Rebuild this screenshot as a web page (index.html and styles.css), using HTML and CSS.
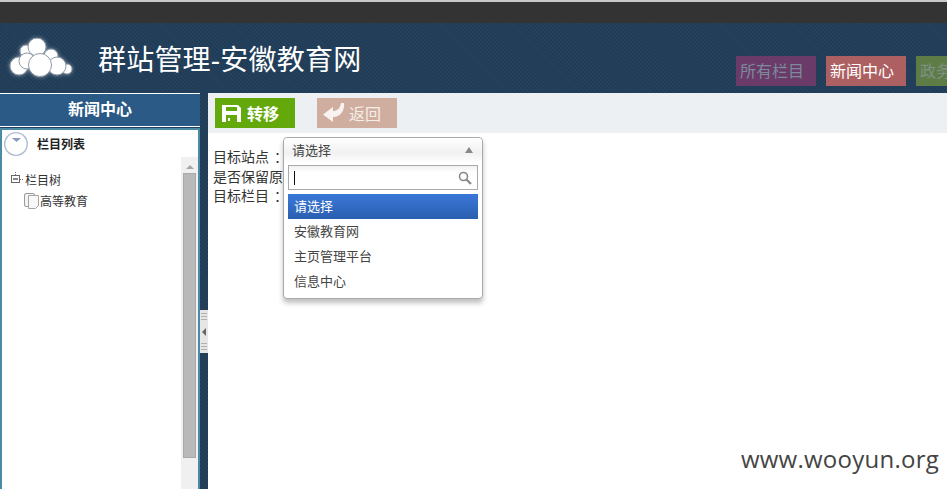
FILE: index.html
```html
<!DOCTYPE html>
<html lang="zh">
<head>
<meta charset="utf-8">
<title>群站管理-安徽教育网</title>
<link rel="stylesheet" href="styles.css">
</head>
<body>
<div class="topline"></div>
<div class="topbar"></div>
<div class="app">
  <header class="header">
    <svg class="logo" width="66" height="44" viewBox="0 0 66 44">
      <g fill="#fff" stroke="#8f9aa6" stroke-width="1">
        <circle cx="18" cy="13" r="6"/>
        <circle cx="43" cy="18" r="7"/>
        <circle cx="29" cy="9" r="9"/>
        <circle cx="59" cy="31" r="5"/>
        <circle cx="49" cy="28" r="9"/>
        <circle cx="11" cy="28" r="9"/>
        <circle cx="19" cy="23" r="8"/>
        <circle cx="32" cy="27" r="11.500"/>
      </g>
    </svg>
    <h1 class="title">群站管理-安徽教育网</h1>
    <nav class="tabs">
      <span class="tab tab-purple">所有栏目</span>
      <span class="tab tab-red">新闻中心</span>
      <span class="tab tab-green">政务</span>
    </nav>
  </header>
  <div class="body">
    <aside class="sidebar">
      <div class="side-title">新闻中心</div>
      <div class="side-panel">
        <div class="panel-head">
          <svg class="chev" width="24" height="24" viewBox="0 0 24 24">
            <circle cx="12" cy="12" r="11.300" fill="#fff" stroke="#aab8d2" stroke-width="1.300"/>
            <path d="M8 6h9l-4.500 4z" fill="#8a9bbd"/>
          </svg>
          <span>栏目列表</span>
        </div>
        <div class="tree-wrap">
          <div class="tree">
            <div class="node">
              <svg width="14" height="14" viewBox="0 0 14 14">
                <path d="M4.500 0v3M9 7.500h4" stroke="#777" stroke-dasharray="1 1" fill="none"/>
                <rect x="0.500" y="3.500" width="8" height="7" fill="#fff" stroke="#666"/>
                <path d="M2 7h5" stroke="#111"/>
              </svg>
              <span>栏目树</span>
            </div>
            <div class="node leaf">
              <svg width="16" height="18" viewBox="0 0 16 18">
                <rect x="0.500" y="2.500" width="10" height="13" rx="1.500" fill="#f4f4f4" stroke="#9a9a9a"/>
                <path d="M4.500 4.500h10v10l-3 3h-7z" fill="#f8f8f8" stroke="#a5a5a5"/>
              </svg>
              <span>高等教育</span>
            </div>
          </div>
          <div class="scroll">
            <span class="scroll-up"></span>
            <div class="scroll-thumb"></div>
          </div>
        </div>
      </div>
    </aside>
    <div class="splitter">
      <div class="grip">
        <i></i><i></i><i></i>
        <b></b>
        <i></i><i></i><i></i>
      </div>
    </div>
    <main class="main">
      <div class="toolbar">
        <button class="btn btn-save">
          <svg width="19" height="17" viewBox="0 0 19 17"><path fill-rule="evenodd" fill="#fff" d="M0 0h16l3 3v14H0zM4 2v4h11V2zM4 10v7h11v-7zM6 13h2v3H6z"/></svg>
          转移
        </button>
        <button class="btn btn-back">
          <svg width="22" height="20" viewBox="0 0 22 20"><path fill="#f8f3f0" d="M0 11.500L10 4v4c4 0 7-2 8-8h3c1 8-4 14-11 14v5z"/></svg>
          返回
        </button>
      </div>
      <form class="form">
        <div class="row">目标站点<span class="colon">：</span></div>
        <div class="row row-cut">是否保留原</div>
        <div class="row">目标栏目<span class="colon">：</span></div>
        <div class="select">
          <div class="select-head"><span>请选择</span><span class="arrow"></span></div>
          <div class="search">
            <span class="caret"></span>
            <svg width="14" height="14" viewBox="0 0 14 14"><circle cx="5.500" cy="5.500" r="4" fill="none" stroke="#888" stroke-width="1.600"/><path d="M8.500 8.500l4.500 4.500" stroke="#888" stroke-width="2.200"/></svg>
          </div>
          <ul class="options">
            <li class="on">请选择</li>
            <li>安徽教育网</li>
            <li>主页管理平台</li>
            <li>信息中心</li>
          </ul>
        </div>
      </form>
      <div class="mark">www.wooyun.org</div>
    </main>
  </div>
</div>
</body>
</html>
```
FILE: styles.css
```css
* { box-sizing: border-box; }
html, body { height: 100%; }
body {
  margin: 0;
  height: 489px;
  overflow: hidden;
  display: flex;
  flex-direction: column;
  font-family: "Liberation Sans", "Noto Sans CJK SC", sans-serif;
  font-size: 13px;
  color: #333;
  background: #fff;
}
.topline { height: 2px; background: #c8c8c8; flex: none; }
.topbar { height: 21px; background: #333; flex: none; }
.app {
  flex: 1;
  min-height: 0;
  display: flex;
  flex-direction: column;
  background-color: #223f5b;
  background-image:
    repeating-conic-gradient(rgba(0,0,0,.06) 0 25%, transparent 0 50%),
    repeating-linear-gradient(45deg, rgba(255,255,255,.02) 0 1px, transparent 1px 3px);
  background-size: 4px 4px, auto;
}
.header { height: 70px; flex: none; display: flex; position: relative; }
.logo {
  margin: 15px 0 0 8px;
  flex: none;
  filter: drop-shadow(0 0 2px rgba(255,255,255,.45));
}
.title {
  margin: 17px 0 0 24px;
  font-size: 28px;
  line-height: 42px;
  font-weight: 400;
  letter-spacing: .2px;
  color: #fff;
  white-space: nowrap;
}
.tabs {
  position: absolute;
  left: 736px;
  top: 33px;
  width: 211px;
  overflow: hidden;
  display: flex;
  gap: 10px;
}
.tab {
  flex: none;
  width: 80px;
  height: 30px;
  padding-left: 4px;
  font-size: 16px;
  line-height: 31px;
  white-space: nowrap;
}
.tab-purple { background: #6a3a68; color: #7d8a9c; }
.tab-red { background: #ad6062; color: #fff; }
.tab-green { background: #5d7c46; color: #7f9187; }
.body { flex: 1; min-height: 0; display: flex; }
.sidebar { width: 200px; flex: none; display: flex; flex-direction: column; }
.side-title {
  height: 34px;
  border-top: 1px solid #fff;
  border-bottom: 1px solid #fff;
  background: #2a5a85;
  color: #fff;
  font-size: 16px;
  font-weight: 700;
  line-height: 32px;
  text-align: center;
  flex: none;
}
.side-panel {
  flex: 1;
  min-height: 0;
  margin-top: 1px;
  border: 2px solid #4a8aa5;
  border-bottom: 0;
  background: #fff;
  display: flex;
  flex-direction: column;
}
.panel-head {
  height: 27px;
  flex: none;
  display: flex;
  align-items: flex-start;
  color: #222;
  font-size: 12px;
  font-weight: 700;
}
.panel-head .chev { margin: 2px 0 0 2px; flex: none; }
.panel-head span { margin: 7px 0 0 9px; line-height: 17px; }
.tree-wrap { flex: 1; min-height: 0; display: flex; }
.tree { flex: 1; padding: 11px 0 0 9px; color: #333; font-size: 12px; }
.node { display: flex; align-items: center; height: 22px; }
.leaf { margin-left: 13px; margin-top: -1px; }
.node svg { flex: none; }
.scroll {
  width: 17px;
  flex: none;
  background: #f0f0f0;
  display: flex;
  flex-direction: column;
  align-items: center;
}
.scroll-up {
  margin: 8px 0 4px;
  width: 0;
  height: 0;
  border-left: 4px solid transparent;
  border-right: 4px solid transparent;
  border-bottom: 4px solid #a6a6a6;
}
.scroll-thumb {
  width: 13px;
  height: 285px;
  background: #b9b9b9;
  border: 1px solid #a9a9a9;
}
.splitter { width: 8px; flex: none; display: flex; align-items: flex-start; }
.grip {
  margin-top: 217px;
  width: 8px;
  height: 43px;
  background: #e6e6e6;
  display: flex;
  flex-direction: column;
  align-items: center;
  justify-content: center;
  gap: 1px;
}
.grip i { width: 6px; height: 1px; background: #b0b0b0; margin-bottom: 1px; flex: none; }
.grip b {
  width: 0;
  height: 0;
  margin: 6px 0;
  border-top: 4px solid transparent;
  border-bottom: 4px solid transparent;
  border-right: 4px solid #666;
  flex: none;
}
.main { flex: 1; min-width: 0; background: #fff; position: relative; overflow: hidden; }
.toolbar {
  height: 40px;
  background: #ecf0f3;
  display: flex;
  align-items: flex-start;
  gap: 22px;
  padding: 5px 0 0 7px;
}
.btn {
  width: 80px;
  height: 30px;
  border: 0;
  padding: 0 0 0 7px;
  display: flex;
  align-items: center;
  gap: 6px;
  font-family: inherit;
  font-size: 16px;
  font-weight: 700;
  color: #fff;
}
.btn-save { background: #63a90c; }
.btn-back { background: #cfaea0; color: #f6eeea; font-weight: 400; gap: 4px; padding-left: 6px; }
.form {
  padding: 15px 0 0 5px;
  position: relative;
  line-height: 19.500px;
  color: #333;
  font-size: 14px;
}
.row { height: 19.500px; white-space: nowrap; }
.colon { margin-left: 5px; }
.select {
  position: absolute;
  left: 75px;
  top: 4px;
  width: 200px;
  height: 162px;
  background: #fff;
  border: 1px solid #aaa;
  border-radius: 4px;
  box-shadow: 0 4px 5px rgba(0,0,0,.25);
  font-size: 13px;
  line-height: normal;
  color: #444;
}
.select-head {
  height: 25px;
  padding: 0 9px 2px 8px;
  display: flex;
  align-items: center;
  justify-content: space-between;
  border-radius: 4px 4px 0 0;
  background: linear-gradient(#fff, #f1f1f1 60%, #fff);
}
.arrow {
  width: 0;
  height: 0;
  border-left: 4px solid transparent;
  border-right: 4px solid transparent;
  border-bottom: 6px solid #888;
}
.search {
  margin: 2px 4px 0;
  height: 25px;
  border: 1px solid #aaa;
  background: linear-gradient(#f0f0f0, #fff 25%);
  display: flex;
  align-items: center;
  justify-content: space-between;
  padding: 0 5px;
}
.caret { width: 1px; height: 14px; background: #111; }
.options { list-style: none; margin: 4px 4px 0; padding: 0; }
.options li { height: 25px; line-height: 25px; padding-left: 6px; }
.options .on { color: #fff; background: linear-gradient(#3a78d8, #2a5fb0); }
.mark {
  position: absolute;
  right: 8px;
  bottom: 15px;
  font-family: "Open Sans", sans-serif;
  font-size: 24px;
  line-height: 30px;
  color: #444;
  letter-spacing: .25px;
}
```
